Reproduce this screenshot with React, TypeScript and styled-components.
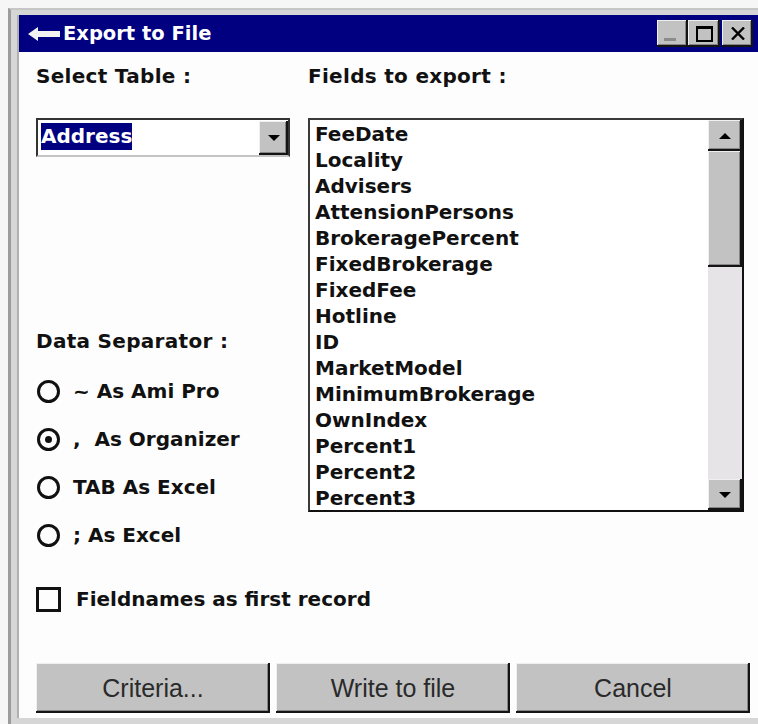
import React from 'react';
import styled, { createGlobalStyle } from 'styled-components';

const GlobalStyle = createGlobalStyle`
  html, body {
    margin: 0;
    padding: 0;
    height: 724px;
    overflow: hidden;
    background: #f6f6f6;
  }
  body {
    font-family: 'Liberation Sans', Arial, sans-serif;
  }
`;

const FIELDS = [
  'FeeDate',
  'Locality',
  'Advisers',
  'AttensionPersons',
  'BrokeragePercent',
  'FixedBrokerage',
  'FixedFee',
  'Hotline',
  'ID',
  'MarketModel',
  'MinimumBrokerage',
  'OwnIndex',
  'Percent1',
  'Percent2',
  'Percent3',
];

const SEPARATORS = [
  { label: '~ As Ami Pro', checked: false },
  { label: ',  As Organizer', checked: true },
  { label: 'TAB As Excel', checked: false },
  { label: '; As Excel', checked: false },
];

// classic raised bevel used by every push button
const raised = `
  background: #c2c2c2;
  box-shadow:
    inset -2px -2px 0 0 #141414,
    inset 1px 1px 0 0 #efefef,
    inset -3px -3px 0 0 #868686;
`;

const ExportDialog = () => {
  return (
    <Page>
      <GlobalStyle />
      <Window>
        <Client>
          <TitleBar>
            <svg width="32" height="14" viewBox="0 0 32 14">
              <polygon
                points="0,7 10,0 10,4 32,4 32,10 10,10 10,14"
                fill="#f2f2f2"
              />
            </svg>
            <Title>Export to File</Title>
            <TitleButtons>
              <CaptionButton $width={31}>
                <MinGlyph />
              </CaptionButton>
              <CaptionButton $width={32}>
                <MaxGlyph />
              </CaptionButton>
              <CaptionButton $width={31} $gap={2}>
                <svg width="14" height="13" viewBox="0 0 14 13">
                  <path
                    d="M1 0.5 L13 12.5 M13 0.5 L1 12.5"
                    stroke="#000"
                    strokeWidth="2.4"
                  />
                </svg>
              </CaptionButton>
            </TitleButtons>
          </TitleBar>

          <Body>
            <Columns>
              <Column $width={254}>
                <Label>Select Table :</Label>
                <Combo>
                  <ComboText>
                    <Selection>Address</Selection>
                  </ComboText>
                  <DropButton>
                    <Arrow $dir="down" />
                  </DropButton>
                </Combo>

                <Label $top={172}>Data Separator :</Label>
                <RadioGroup>
                  {SEPARATORS.map((s) => (
                    <RadioRow key={s.label}>
                      <RadioDot $checked={s.checked} />
                      <OptionText>{s.label}</OptionText>
                    </RadioRow>
                  ))}
                </RadioGroup>
              </Column>

              <Column $width={436}>
                <Label>Fields to export :</Label>
                <ListBox>
                  <Items>
                    {FIELDS.map((f) => (
                      <Item key={f}>{f}</Item>
                    ))}
                  </Items>
                  <ScrollBar>
                    <ScrollButton>
                      <Arrow $dir="up" />
                    </ScrollButton>
                    <Thumb />
                    <Track />
                    <ScrollButton>
                      <Arrow $dir="down" />
                    </ScrollButton>
                  </ScrollBar>
                </ListBox>
              </Column>
            </Columns>

            <CheckRow>
              <CheckBox />
              <OptionText>Fieldnames as first record</OptionText>
            </CheckRow>

            <ButtonRow>
              <PushButton>Criteria...</PushButton>
              <PushButton>Write to file</PushButton>
              <PushButton>Cancel</PushButton>
            </ButtonRow>
          </Body>
        </Client>
      </Window>
    </Page>
  );
};

export default function App() {
  return <ExportDialog />;
}

const Page = styled.div`
  box-sizing: border-box;
  height: 724px;
  padding: 8px 0 0 8px;
`;

const Window = styled.div`
  box-sizing: border-box;
  width: 750px;
  height: 716px;
  background: #d6d6d6;
  border-left: 3px solid #9c9c9c;
  border-top: 2px solid #c6c6c6;
  padding: 5px 0 6px 6px;
`;

const Client = styled.div`
  box-sizing: border-box;
  height: 100%;
  display: flex;
  flex-direction: column;
  background: #fdfdfd;
  border-left: 2px solid #b0b0b0;
`;

const TitleBar = styled.div`
  height: 37px;
  flex-shrink: 0;
  display: flex;
  align-items: center;
  gap: 3px;
  padding: 0 5px 0 9px;
  background: #000080;
`;

const Title = styled.span`
  font-family: 'DejaVu Sans', 'Liberation Sans', sans-serif;
  color: #fff;
  font-size: 19.5px;
  font-weight: bold;
`;

const TitleButtons = styled.div`
  margin-left: auto;
  display: flex;
`;

const CaptionButton = styled.div<{ $width: number; $gap?: number }>`
  ${raised}
  width: ${(p) => p.$width}px;
  height: 27px;
  margin-left: ${(p) => p.$gap ?? 0}px;
  display: flex;
  align-items: center;
  justify-content: center;
`;

const MinGlyph = styled.div`
  width: 12px;
  height: 3px;
  background: #8c8c8c;
  align-self: flex-end;
  margin: 0 6px 6px 0;
`;

const MaxGlyph = styled.div`
  box-sizing: border-box;
  width: 17px;
  height: 16px;
  border: 2px solid #000;
  border-top-width: 3px;
`;

const Body = styled.div`
  display: flex;
  flex-direction: column;
  padding: 12px 0 0 17px;
`;

const Columns = styled.div`
  display: flex;
  gap: 18px;
  align-items: flex-start;
`;

const Column = styled.div<{ $width: number }>`
  width: ${(p) => p.$width}px;
  display: flex;
  flex-direction: column;
`;

const boldText = `
  font-family: 'DejaVu Sans', 'Liberation Sans', sans-serif;
  font-size: 20px;
  font-weight: bold;
  color: #111;
  white-space: pre;
`;

const Label = styled.div<{ $top?: number }>`
  ${boldText}
  line-height: 24px;
  letter-spacing: 0.3px;
  margin-top: ${(p) => p.$top ?? 0}px;
`;

const Combo = styled.div`
  box-sizing: border-box;
  margin-top: 30px;
  height: 39px;
  display: flex;
  border: 2px solid;
  border-color: #333 #333 #c4c4c4 #333;
  background: #fff;
`;

const ComboText = styled.div`
  flex: 1;
  padding: 3px 0 0 3px;
`;

const Selection = styled.span`
  ${boldText}
  display: inline-block;
  line-height: 27px;
  color: #fff;
  background: #000080;
`;

const DropButton = styled.div`
  ${raised}
  width: 29px;
  margin-top: 1px;
  display: flex;
  align-items: center;
  justify-content: center;
`;

const Arrow = styled.div<{ $dir: 'up' | 'down' }>`
  width: 0;
  height: 0;
  border-left: 6px solid transparent;
  border-right: 6px solid transparent;
  ${(p) =>
    p.$dir === 'down'
      ? 'border-top: 6px solid #000;'
      : 'border-bottom: 6px solid #000;'}
`;

const RadioGroup = styled.div`
  margin-top: 14px;
  display: flex;
  flex-direction: column;
`;

const RadioRow = styled.div`
  height: 48px;
  display: flex;
  align-items: center;
  gap: 13px;
`;

const RadioDot = styled.div<{ $checked: boolean }>`
  box-sizing: border-box;
  width: 23px;
  height: 23px;
  margin-left: 1px;
  border: 3px solid #111;
  border-radius: 50%;
  display: flex;
  align-items: center;
  justify-content: center;

  &::after {
    content: '';
    width: 7px;
    height: 7px;
    border-radius: 50%;
    background: #111;
    display: ${(p) => (p.$checked ? 'block' : 'none')};
  }
`;

const OptionText = styled.span`
  ${boldText}
  line-height: 24px;
`;

const ListBox = styled.div`
  box-sizing: border-box;
  margin-top: 30px;
  height: 394px;
  display: flex;
  border: 2px solid;
  border-color: #3a3a3a #111 #111 #3a3a3a;
  background: #fff;
`;

const Items = styled.div`
  flex: 1;
  padding: 1px 0 0 5px;
  overflow: hidden;
`;

const Item = styled.div`
  ${boldText}
  line-height: 26px;
`;

const ScrollBar = styled.div`
  width: 34px;
  display: flex;
  flex-direction: column;
`;

const ScrollButton = styled.div`
  ${raised}
  height: 31px;
  flex-shrink: 0;
  display: flex;
  align-items: center;
  justify-content: center;
`;

const Thumb = styled.div`
  ${raised}
  height: 116px;
  flex-shrink: 0;
`;

const Track = styled.div`
  flex: 1;
  background: #e7e4e7;
`;

const CheckRow = styled.div`
  margin-top: 27px;
  height: 26px;
  display: flex;
  align-items: center;
  gap: 15px;
`;

const CheckBox = styled.div`
  box-sizing: border-box;
  width: 25px;
  height: 25px;
  border: 3px solid #111;
`;

const ButtonRow = styled.div`
  margin-top: 51px;
  display: flex;
  gap: 6px;
`;

const PushButton = styled.div`
  ${raised}
  width: 234px;
  height: 50px;
  display: flex;
  align-items: center;
  justify-content: center;
  font-size: 25px;
  color: #2a2a2a;
`;
